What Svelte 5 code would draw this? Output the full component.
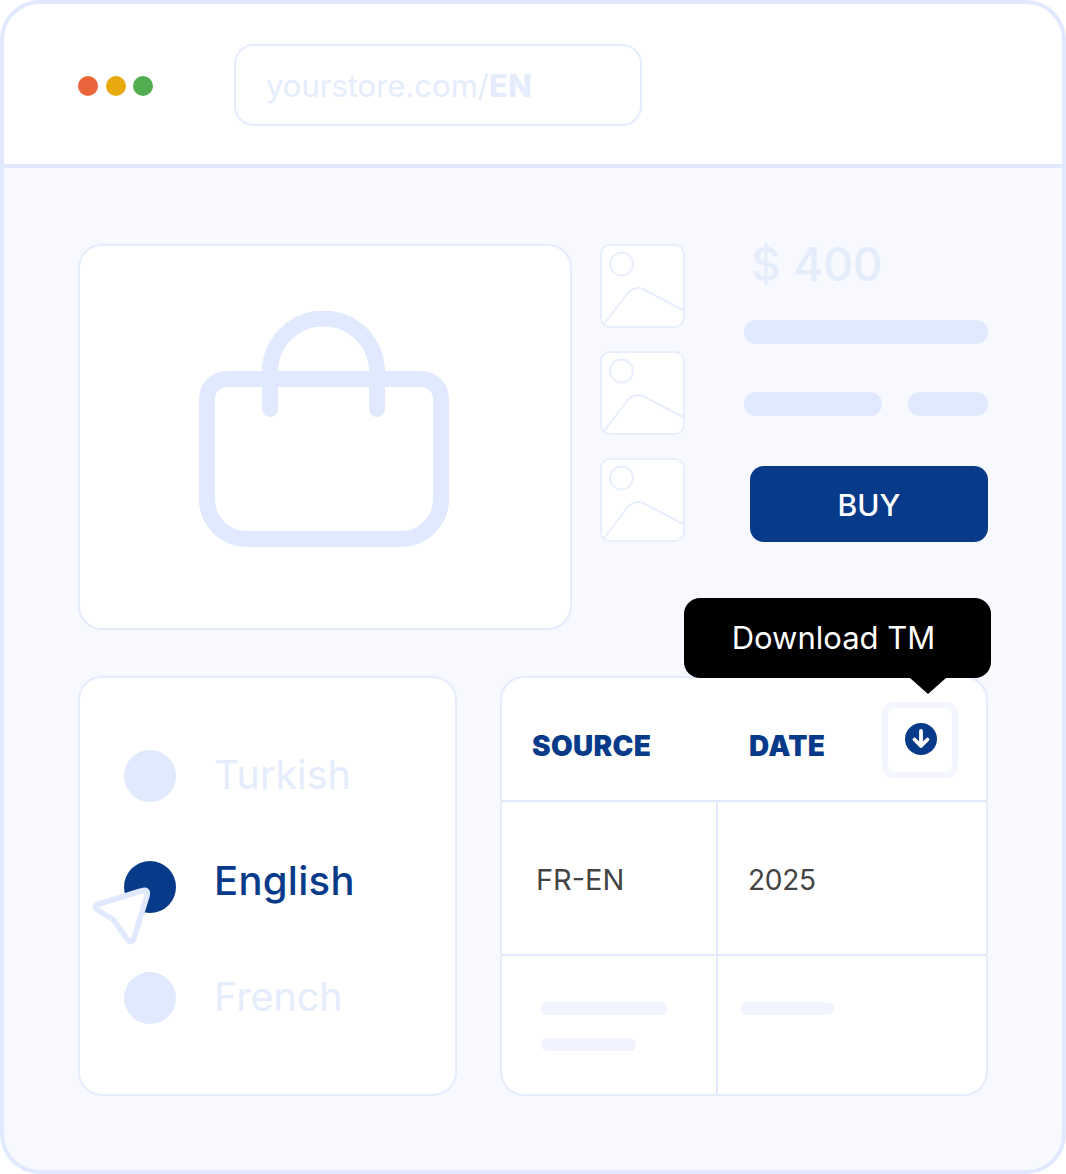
<script>
  const thumbs = [0, 1, 2];
  const languages = [
    { name: 'Turkish', active: false },
    { name: 'English', active: true },
    { name: 'French', active: false }
  ];
</script>

<div class="frame">
  <header class="head">
    <div class="dots">
      <span class="dot red"></span>
      <span class="dot amber"></span>
      <span class="dot green"></span>
    </div>
    <div class="url">yourstore.com/<b>EN</b></div>
  </header>

  <main class="body">
    <section class="top">
      <div class="hero">
        <svg class="bag" width="250" height="236" viewBox="199 311 250 236" fill="none" stroke="#e0e9fd" stroke-width="16" stroke-linecap="round">
          <path d="M227 379H421A20 20 0 0 1 441 399V499A40 40 0 0 1 401 539H247A40 40 0 0 1 207 499V399A20 20 0 0 1 227 379Z" />
          <path d="M270 409V372a53.5 53.5 0 0 1 107 0V409" />
        </svg>
      </div>

      <div class="thumbs">
        {#each thumbs as t}
          <div class="thumb">
            <svg width="85" height="84" viewBox="0 0 85 84" fill="none" stroke="#e8eefc" stroke-width="2">
              <circle cx="21.5" cy="20" r="11.5" />
              <path d="M4 80L24 54Q32 41 43 45L83 66" />
            </svg>
          </div>
        {/each}
      </div>

      <div class="info">
        <div class="price">$ 400</div>
        <div class="bar full"></div>
        <div class="bar-row">
          <div class="bar long"></div>
          <div class="bar short"></div>
        </div>
        <button class="buy">BUY</button>
      </div>
    </section>

    <section class="bottom">
      <div class="langs">
        {#each languages as l}
          <div class="lang" class:active={l.active}>
            <span class="radio"></span>
            <span class="lang-name">{l.name}</span>
          </div>
        {/each}
        <svg class="cursor" width="64" height="66" viewBox="90 884 64 66" fill="#fff" stroke="#e0e9fd" stroke-width="5.5" stroke-linejoin="round">
          <path d="M141 891Q149 888 147 896L134 938Q131 945 127 939L115 922Q114 920 112 919L98 910Q92 906 99 904Z" />
        </svg>
      </div>

      <div class="table">
        <div class="tooltip">Download TM</div>
        <div class="thead">
          <span class="th src">SOURCE</span>
          <span class="th date">DATE</span>
          <div class="dl">
            <svg width="32" height="32" viewBox="0 0 32 32" fill="none">
              <circle cx="16" cy="16" r="16" fill="#073b8a" />
              <path d="M16 8V23M9.5 16.5L16 23L22.5 16.5" stroke="#fff" stroke-width="3.8" stroke-linecap="round" stroke-linejoin="round" />
            </svg>
          </div>
        </div>
        <div class="row data">
          <div class="cell left"><span class="val">FR-EN</span></div>
          <div class="cell"><span class="val year">2025</span></div>
        </div>
        <div class="row ghost">
          <div class="cell left ghost-left">
            <span class="ph w1"></span>
            <span class="ph w2"></span>
          </div>
          <div class="cell ghost-right">
            <span class="ph w3"></span>
          </div>
        </div>
      </div>
    </section>
  </main>
</div>

<style>
  :global(body) {
    margin: 0;
    background: #fff;
  }
  .frame {
    box-sizing: border-box;
    width: 1066px;
    height: 1174px;
    border: 4px solid #e0e9fd;
    border-radius: 40px;
    background: #f7f9ff;
    overflow: hidden;
    font-family: Inter, "Noto Sans", sans-serif;
  }
  .head {
    box-sizing: border-box;
    height: 164px;
    background: #fff;
    border-bottom: 4px solid #e0e9fd;
    display: flex;
    align-items: center;
    padding: 2px 0 0 74px;
  }
  .dots {
    display: flex;
    gap: 7.5px;
    width: 156px;
    margin-top: 1px;
  }
  .dot {
    width: 20px;
    height: 20px;
    border-radius: 50%;
  }
  .red { background: #ea643c; }
  .amber { background: #e8a90e; }
  .green { background: #52ad50; }
  .url {
    box-sizing: border-box;
    width: 408px;
    height: 82px;
    border: 2px solid #e5ecfc;
    border-radius: 20px;
    padding-left: 30px;
    display: flex;
    align-items: center;
    font-size: 31px;
    color: #e5ecfc;
  }
  .url b { font-weight: 800; }
  .body {
    display: flex;
    flex-direction: column;
    gap: 46px;
    padding: 76px 0 0 74px;
  }
  .top {
    display: flex;
    height: 386px;
  }
  .hero {
    box-sizing: border-box;
    width: 494px;
    height: 386px;
    background: #fff;
    border: 2px solid #e5ecfc;
    border-radius: 24px;
    display: flex;
    justify-content: center;
    padding: 65px 3px 0 0;
  }
  .thumbs {
    display: flex;
    flex-direction: column;
    gap: 23px;
    margin-left: 28px;
  }
  .thumb {
    box-sizing: border-box;
    width: 85px;
    height: 84px;
    background: #fff;
    border-radius: 10px;
    box-shadow: inset 0 0 0 2px #e8eefc;
    overflow: hidden;
  }
  .thumb svg { display: block; }
  .info {
    width: 244px;
    margin-left: 59px;
    display: flex;
    flex-direction: column;
    align-items: flex-end;
  }
  .price {
    align-self: flex-start;
    margin-left: 7px;
    height: 40px;
    line-height: 40px;
    font-size: 46px;
    font-weight: 500;
    color: #e5ecfc;
  }
  .bar {
    height: 24px;
    border-radius: 12px;
    background: #e0e9fd;
  }
  .full {
    width: 244px;
    margin-top: 36px;
  }
  .bar-row {
    width: 244px;
    display: flex;
    justify-content: space-between;
    margin-top: 48px;
  }
  .long { width: 138px; }
  .short { width: 80px; }
  .buy {
    width: 238px;
    height: 76px;
    margin-top: 50px;
    padding-top: 2px;
    border: 0;
    border-radius: 14px;
    background: #073b8a;
    color: #fff;
    font-family: inherit;
    font-size: 30px;
    font-weight: 500;
  }
  .bottom {
    display: flex;
    gap: 43px;
  }
  .langs {
    box-sizing: border-box;
    position: relative;
    width: 379px;
    height: 420px;
    background: #fff;
    border: 2px solid #e5ecfc;
    border-radius: 24px;
    padding: 72px 0 0 44px;
    display: flex;
    flex-direction: column;
    gap: 59px;
  }
  .lang {
    display: flex;
    align-items: center;
    height: 52px;
    gap: 38px;
    font-size: 39.5px;
    color: #e5ecfc;
  }
  .lang-name { margin-top: -2px; }
  .lang.active {
    font-size: 40px;
    color: #073b8a;
    font-weight: 500;
  }
  .lang.active .lang-name { margin-top: -14px; letter-spacing: 0.3px; }
  .radio {
    width: 52px;
    height: 52px;
    border-radius: 50%;
    background: #e0e9fd;
  }
  .lang.active .radio { background: #073b8a; }
  .cursor {
    position: absolute;
    left: 10px;
    top: 206px;
  }
  .table {
    box-sizing: border-box;
    position: relative;
    width: 488px;
    height: 420px;
    background: #fff;
    border: 2px solid #e5ecfc;
    border-radius: 24px;
  }
  .tooltip {
    box-sizing: border-box;
    position: absolute;
    left: 182px;
    top: -80px;
    width: 307px;
    height: 80px;
    padding: 0 8px 2px 0;
    border-radius: 16px;
    background: #000;
    color: #fff;
    font-size: 31px;
    display: flex;
    align-items: center;
    justify-content: center;
  }
  .tooltip::after {
    content: "";
    position: absolute;
    left: 226px;
    top: 80px;
    border-left: 18px solid transparent;
    border-right: 18px solid transparent;
    border-top: 16px solid #000;
  }
  .thead {
    position: relative;
    height: 122px;
    display: flex;
    align-items: center;
    border-bottom: 2px solid #e0e9fd;
  }
  .th {
    font-size: 28px;
    font-weight: 900;
    letter-spacing: 0.3px;
    color: #073b8a;
    margin-top: 14px;
  }
  .src { margin-left: 30px; width: 217px; }
  .dl {
    box-sizing: border-box;
    position: absolute;
    left: 380px;
    top: 24px;
    width: 76px;
    height: 76px;
    border: 6px solid #f3f6ff;
    border-radius: 12px;
    padding: 15px 0 0 17px;
  }
  .dl svg { display: block; }
  .row {
    display: grid;
    grid-template-columns: 216px 1fr;
  }
  .data {
    height: 152px;
    border-bottom: 2px solid #e0e9fd;
  }
  .ghost { height: 138px; }
  .cell {
    display: flex;
    align-items: center;
  }
  .left { border-right: 2px solid #e0e9fd; }
  .val {
    font-size: 29px;
    color: #444;
    margin-left: 34px;
    margin-top: 2px;
  }
  .year {
    margin-left: 30px;
    margin-top: 4px;
    font-size: 28px;
    letter-spacing: -0.3px;
  }
  .ghost-left, .ghost-right {
    flex-direction: column;
    align-items: flex-start;
    padding-top: 46px;
    gap: 23px;
  }
  .ghost-left { padding-left: 39px; }
  .ghost-right { padding-left: 23px; }
  .ph {
    height: 13px;
    border-radius: 6px;
    background: #f1f4fe;
  }
  .w1 { width: 126px; }
  .w2 { width: 95px; }
  .w3 { width: 93px; }
</style>
